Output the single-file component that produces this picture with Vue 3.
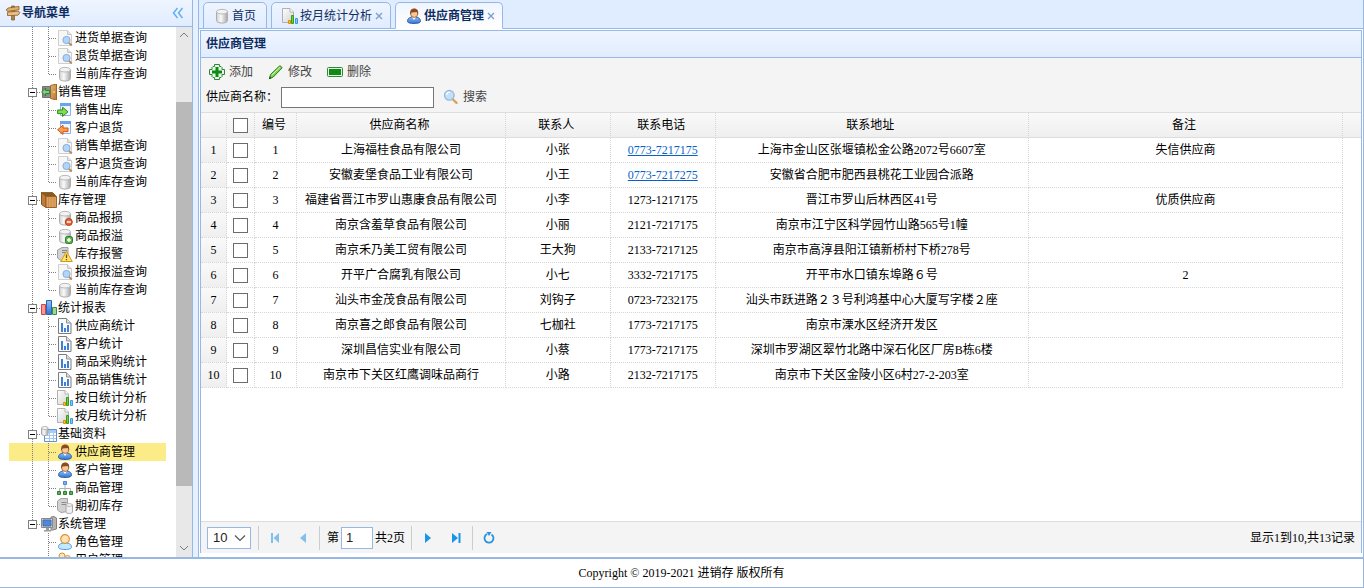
<script setup>
import { ref } from 'vue'

const groups = ref([
  {
    lead: true,
    items: [
      { icon: 'doc-search', text: '进货单据查询' },
      { icon: 'doc-search', text: '退货单据查询' },
      { icon: 'db', text: '当前库存查询' }
    ]
  },
  {
    icon: 'door',
    text: '销售管理',
    items: [
      { icon: 'go-out', text: '销售出库' },
      { icon: 'go-back', text: '客户退货' },
      { icon: 'doc-search', text: '销售单据查询' },
      { icon: 'doc-search', text: '客户退货查询' },
      { icon: 'db', text: '当前库存查询' }
    ]
  },
  {
    icon: 'box',
    text: '库存管理',
    items: [
      { icon: 'db-minus', text: '商品报损' },
      { icon: 'db-plus', text: '商品报溢' },
      { icon: 'server-warn', text: '库存报警' },
      { icon: 'doc-search', text: '报损报溢查询' },
      { icon: 'db', text: '当前库存查询' }
    ]
  },
  {
    icon: 'bars',
    text: '统计报表',
    items: [
      { icon: 'doc-chart', text: '供应商统计' },
      { icon: 'doc-chart', text: '客户统计' },
      { icon: 'doc-chart', text: '商品采购统计' },
      { icon: 'doc-chart', text: '商品销售统计' },
      { icon: 'doc-bars', text: '按日统计分析' },
      { icon: 'doc-bars', text: '按月统计分析' }
    ]
  },
  {
    icon: 'db-table',
    text: '基础资料',
    items: [
      { icon: 'user', text: '供应商管理', selected: true },
      { icon: 'user', text: '客户管理' },
      { icon: 'org', text: '商品管理' },
      { icon: 'server-db', text: '期初库存' }
    ]
  },
  {
    icon: 'computer',
    text: '系统管理',
    last: true,
    items: [
      { icon: 'person', text: '角色管理' },
      { icon: 'people', text: '用户管理' }
    ]
  }
])

const tabs = [
  { icon: 'db', text: '首页' },
  { icon: 'doc-bars', text: '按月统计分析', closable: true },
  { icon: 'user', text: '供应商管理', closable: true, active: true }
]

const tools = [
  { icon: 'add', text: '添加' },
  { icon: 'pencil', text: '修改' },
  { icon: 'remove', text: '删除' }
]

const suppliers = [
  { id: 1, name: '上海福桂食品有限公司', contact: '小张', phone: '0773-7217175', link: true, address: '上海市金山区张堰镇松金公路2072号6607室', remark: '失信供应商' },
  { id: 2, name: '安徽麦堡食品工业有限公司', contact: '小王', phone: '0773-7217275', link: true, address: '安徽省合肥市肥西县桃花工业园合派路', remark: '' },
  { id: 3, name: '福建省晋江市罗山惠康食品有限公司', contact: '小李', phone: '1273-1217175', address: '晋江市罗山后林西区41号', remark: '优质供应商' },
  { id: 4, name: '南京含羞草食品有限公司', contact: '小丽', phone: '2121-7217175', address: '南京市江宁区科学园竹山路565号1幢', remark: '' },
  { id: 5, name: '南京禾乃美工贸有限公司', contact: '王大狗', phone: '2133-7217125', address: '南京市高淳县阳江镇新桥村下桥278号', remark: '' },
  { id: 6, name: '开平广合腐乳有限公司', contact: '小七', phone: '3332-7217175', address: '开平市水口镇东埠路６号', remark: '2' },
  { id: 7, name: '汕头市金茂食品有限公司', contact: '刘钩子', phone: '0723-7232175', address: '汕头市跃进路２３号利鸿基中心大厦写字楼２座', remark: '' },
  { id: 8, name: '南京喜之郎食品有限公司', contact: '七枷社', phone: '1773-7217175', address: '南京市溧水区经济开发区', remark: '' },
  { id: 9, name: '深圳昌信实业有限公司', contact: '小蔡', phone: '1773-7217175', address: '深圳市罗湖区翠竹北路中深石化区厂房B栋6楼', remark: '' },
  { id: 10, name: '南京市下关区红鹰调味品商行', contact: '小路', phone: '2132-7217175', address: '南京市下关区金陵小区6村27-2-203室', remark: '' }
]

const keyword = ref('')
const page = ref('1')
const size = ref('10')
</script>

<template>
  <div class="app">
    <svg class="sprite" aria-hidden="true">
      <defs>
        <linearGradient id="g-metal" x1="0" x2="1" y1="0" y2="0">
          <stop offset="0" stop-color="#cfcfcf" /><stop offset=".4" stop-color="#fafafa" /><stop offset="1" stop-color="#a6a6a6" />
        </linearGradient>
        <linearGradient id="g-blue" x1="0" x2="0" y1="0" y2="1">
          <stop offset="0" stop-color="#8fc0f5" /><stop offset="1" stop-color="#3173cb" />
        </linearGradient>
        <linearGradient id="g-page" x1="0" x2="1" y1="0" y2="1">
          <stop offset="0" stop-color="#ffffff" /><stop offset="1" stop-color="#d2d2d2" />
        </linearGradient>
        <linearGradient id="g-wood" x1="0" x2="1" y1="0" y2="1">
          <stop offset="0" stop-color="#e3b676" /><stop offset="1" stop-color="#b57a38" />
        </linearGradient>
      </defs>

      <symbol id="i-sign" viewBox="0 0 16 16">
        <path d="M7.5 1h2v14h-3V1z" fill="#b58442" stroke="#805225" stroke-width=".7" />
        <path d="M1 5l2-2 11-1.6v3.4L3 6.400z" fill="#dfb068" stroke="#8c5c2c" stroke-width=".8" />
        <path d="M15 7.600l-2-1.400-10.500 1v3.400l10.500-.4z" fill="#e8c080" stroke="#8c5c2c" stroke-width=".8" />
      </symbol>
      <symbol id="i-doc-search" viewBox="0 0 16 16">
        <path d="M1.500.5h9l4 4v11h-13z" fill="#f7f7f7" stroke="#cfcfcf" />
        <path d="M10.500.5v4h4" fill="#e4e4e4" stroke="#c6c6c6" />
        <path d="M11.800 12.800l3 2.700" stroke="#c08a52" stroke-width="2" />
        <circle cx="9.500" cy="10" r="3.600" fill="#b4d4f6" stroke="#84acdf" />
      </symbol>
      <symbol id="i-db" viewBox="0 0 16 16">
        <path d="M2.500 3.500v9c0 3.400 11 3.400 11 0v-9z" fill="url(#g-metal)" stroke="#adadad" />
        <ellipse cx="8" cy="3.700" rx="5.500" ry="2.300" fill="#f3f3f3" stroke="#bababa" />
      </symbol>
      <symbol id="i-door" viewBox="0 0 16 16">
        <path d="M1.500 2.500h10v11h-10z" fill="#8b8b8b" stroke="#6a756b" />
        <path d="M9.500 1.500l6-1.500v16l-6-1.500z" fill="url(#g-wood)" stroke="#9c672b" />
        <circle cx="13" cy="8" r=".9" fill="#ffe15c" />
        <path d="M.6 8l4-4v2.500h4v3h-4V12z" fill="#7fd07a" stroke="#277c2c" stroke-width=".9" />
      </symbol>
      <symbol id="i-go-out" viewBox="0 0 16 16">
        <path d="M3.500 1.500h10v12h-10z" fill="#eef6ff" stroke="#8cb4e5" /><path d="M3 1h11v3H3z" fill="#6aa5ea" />
        <path d="M.6 8h5V5.200L11 9.800l-5.400 4.600v-2.800h-5z" fill="#83dc4f" stroke="#2b8b1c" />
      </symbol>
      <symbol id="i-go-back" viewBox="0 0 16 16">
        <path d="M3.500 1.500h10v12h-10z" fill="#eef6ff" stroke="#8cb4e5" /><path d="M3 1h11v3H3z" fill="#6aa5ea" />
        <path d="M11 8H6V5.200L.6 9.800 6 14.400v-2.800h5z" fill="#ff9c4d" stroke="#cf5713" />
      </symbol>
      <symbol id="i-box" viewBox="0 0 16 16">
        <path d="M.5.5h11l4 4H5z" fill="#8a5823" stroke="#94602a" />
        <path d="M.5.5L5 4.500v11l-4.500-3z" fill="#bd7c39" stroke="#8a5520" />
        <path d="M5 4.500h10.500v11H5z" fill="#dda260" stroke="#9c6128" />
        <path d="M7.500 5v10M10.200 5v10M13 5v10" stroke="#c68a48" stroke-width=".8" />
      </symbol>
      <symbol id="i-db-minus" viewBox="0 0 16 16">
        <use href="#i-db" />
        <circle cx="11.800" cy="12" r="3.500" fill="#ec6535" stroke="#b63c12" /><path d="M9.800 12h4" stroke="#fff" stroke-width="1.500" />
      </symbol>
      <symbol id="i-db-plus" viewBox="0 0 16 16">
        <use href="#i-db" />
        <rect x="8.500" y="8.500" width="7" height="7" rx="2" fill="#58b247" stroke="#28782a" /><path d="M10 12h4M12 10v4" stroke="#fff" stroke-width="1.400" />
      </symbol>
      <symbol id="i-server-warn" viewBox="0 0 16 16">
        <path d="M.5 4L5 1.500h6v13H4L.5 12z" fill="#d2d2d2" stroke="#a0a0a0" /><path d="M5 4.500h5M5 6.500h5" stroke="#858585" />
        <path d="M9.500 5.500l5.800 10H3.700z" fill="#ffe56a" stroke="#d39a19" /><path d="M9.500 8.500v3.500M9.500 13v1.300" stroke="#7a5204" stroke-width="1.300" />
      </symbol>
      <symbol id="i-bars" viewBox="0 0 16 16">
        <path d="M.5 4.500h4v10h-4z" fill="#f4989b" stroke="#d34145" />
        <path d="M5.500.5h5v14h-5z" fill="url(#g-blue)" stroke="#2864b8" />
        <path d="M11.500 7.500h4v7h-4z" fill="#a2d69d" stroke="#3d8d42" />
      </symbol>
      <symbol id="i-doc-chart" viewBox="0 0 16 16">
        <path d="M1.500.5h8l4.500 4.500v10.500H1.500z" fill="#fafafa" stroke="#7c7c7c" /><path d="M9.500.5V5H14" fill="#ddd" stroke="#929292" />
        <path d="M4 5h2v9H4zM7 10h2v4H7zM10 7h2v7h-2z" fill="#3e80d5" />
      </symbol>
      <symbol id="i-doc-bars" viewBox="0 0 16 16">
        <path d="M.5.5h7.500l3.500 3.500v10.500H.5z" fill="url(#g-page)" stroke="#b0b0b0" /><path d="M8 .5V4h3.500" fill="#fff" stroke="#b6b6b6" />
        <path d="M6.500 12.500h2v3h-2z" fill="#ffc21d" stroke="#dd8d0d" />
        <path d="M9.500 7.500h2v8h-2z" fill="#6fd03d" stroke="#369a1b" />
        <path d="M13.500 10.500h2v5h-2z" fill="#7dcdf7" stroke="#4398dc" />
      </symbol>
      <symbol id="i-db-table" viewBox="0 0 16 16">
        <path d="M3.500 3.500h12v12h-12z" fill="#fff" stroke="#5d92d2" /><path d="M4 4h11v3H4z" fill="#a7cef2" />
        <path d="M4 9.500h11M4 12.500h11M8.500 7v8M12.500 7v8" stroke="#a5c8ee" />
        <path d="M.5 2v6c0 2 6.500 2 6.500 0V2z" fill="url(#g-metal)" stroke="#ababab" /><ellipse cx="3.800" cy="2" rx="3.300" ry="1.500" fill="#f6f6f6" stroke="#b5b5b5" />
      </symbol>
      <symbol id="i-user" viewBox="0 0 16 16">
        <path d="M1.500 13.500C1.500 10 4 9 8 9s6.500 1 6.500 4.500c0 1-2.500 2-6.500 2s-6.500-1-6.500-2z" fill="url(#g-blue)" stroke="#2c5da9" />
        <path d="M6 9h4l-2 3z" fill="#fff" />
        <circle cx="8.200" cy="5.800" r="3.600" fill="#f9c894" stroke="#90542a" stroke-width=".8" />
        <path d="M4.300 6.500C3.500 2.500 5.500.5 8 .5s5 1.500 4 6l-1-2.500-5.500.5z" fill="#8b4a22" />
      </symbol>
      <symbol id="i-person" viewBox="0 0 16 16">
        <path d="M1.500 13.500C1.500 10 4 9 8 9s6.500 1 6.500 4.500c0 1-2.500 2-6.500 2s-6.500-1-6.500-2z" fill="#c6e8ff" stroke="#3b9be5" />
        <circle cx="8" cy="5" r="4.300" fill="#ffe3b5" stroke="#dc9231" stroke-width="1.200" />
      </symbol>
      <symbol id="i-people" viewBox="0 0 16 16">
        <circle cx="5" cy="4" r="3" fill="#ffe3b5" stroke="#dc9231" /><circle cx="10.500" cy="6.500" r="3" fill="#ffe3b5" stroke="#dc9231" />
        <path d="M.5 13c0-4 4-5 6-4M5 15.500c0-6 10-6 10.500 0z" fill="#c6e8ff" stroke="#3b9be5" />
      </symbol>
      <symbol id="i-org" viewBox="0 0 16 16">
        <path d="M8 5v3M2.500 11V8.500h11V11M8 8v3" fill="none" stroke="#b0b0b0" />
        <path d="M6.500 1.500h3v3h-3z" fill="#7db3f5" stroke="#4a87d5" />
        <path d="M.5 11.500h3v3h-3zM6.500 11.500h3v3h-3zM12.500 11.500h3v3h-3z" fill="#5eb05e" stroke="#2a802c" />
      </symbol>
      <symbol id="i-server-db" viewBox="0 0 16 16">
        <path d="M.5 3L4 .5h6.500v13L4 14.500.5 12z" fill="#d2d2d2" stroke="#a2a2a2" /><path d="M4.500 4.500h5M4.500 6.500h5" stroke="#8a8a8a" />
        <path d="M9 7v7c0 2 6.500 2 6.500 0V7z" fill="#efefef" stroke="#a8a8a8" /><ellipse cx="12.200" cy="7" rx="3.300" ry="1.300" fill="#fff" stroke="#b0b0b0" />
      </symbol>
      <symbol id="i-computer" viewBox="0 0 16 16">
        <path d="M10 1l3-.5 2.500 1.500v11L12 14h-2z" fill="#b3b3b3" stroke="#828282" />
        <path d="M.5 2.500h11v9H.5z" fill="#d8d8d8" stroke="#888" /><path d="M2 4h8v6H2z" fill="#4f88d6" stroke="#3f6cb0" />
        <path d="M5 12h3v2h2v1.500H3V14h2z" fill="#9a9a9a" />
      </symbol>
      <symbol id="i-add" viewBox="0 0 16 16">
        <path d="M5.500.5h5v2h1.500l1 1v2h2.500v5H13v2l-1 1h-1.500v2h-5v-2H4l-1-1v-2H.5v-5H3v-2l1-1h1.500z" fill="#e5f4e4" stroke="#31863a" />
        <path d="M6.500 3h3v3.500H13v3H9.500V13h-3V9.500H3v-3h3.500z" fill="#0f8a15" />
      </symbol>
      <symbol id="i-pencil" viewBox="0 0 16 16">
        <path d="M1.500 14.500l1-4L11.500 2c.6-.6 3 1.200 2.500 2L5.300 13z" fill="#7fd44e" stroke="#2c7d24" />
        <path d="M3.800 11L12 3.300" stroke="#d4f7b8" /><path d="M.8 15.200l1-2.700 1.700 1.700z" fill="#1b4f16" />
      </symbol>
      <symbol id="i-remove" viewBox="0 0 16 16">
        <rect x=".5" y="3.500" width="15" height="9" rx="1" fill="#e5f4e4" stroke="#31863a" /><path d="M2 5h12v6H2z" fill="#0f8a15" />
      </symbol>
      <symbol id="i-search" viewBox="0 0 16 16">
        <path d="M9.500 10l4 3.800" stroke="#d9a35a" stroke-width="2.400" stroke-linecap="round" />
        <circle cx="6.300" cy="6.300" r="4.800" fill="#c0e0fb" stroke="#9bb8d2" stroke-width="1.300" /><path d="M3.800 6c0-2 1.500-2.800 3-2.800" fill="none" stroke="#fff" stroke-width="1.300" />
      </symbol>
      <symbol id="i-first" viewBox="0 0 16 16"><path d="M4 3h2v10H4zM12 3v10L6.500 8z" fill="#7fc0ef" /></symbol>
      <symbol id="i-prev" viewBox="0 0 16 16"><path d="M11 3v10L5 8z" fill="#7fc0ef" /></symbol>
      <symbol id="i-next" viewBox="0 0 16 16"><path d="M5 3v10l6-5z" fill="#1b95ea" /></symbol>
      <symbol id="i-last" viewBox="0 0 16 16"><path d="M10.500 3h2v10h-2zM4 3v10l6-5z" fill="#1b95ea" /></symbol>
      <symbol id="i-refresh" viewBox="0 0 16 16">
        <path d="M6.200 4A4.500 4.500 0 1 0 10.500 4.400" fill="none" stroke="#2b93dd" stroke-width="1.800" /><path d="M5.500 2h5L8 6z" fill="#2b93dd" />
      </symbol>
      <symbol id="i-close" viewBox="0 0 8 8"><path d="M1 1l6 6M7 1L1 7" stroke="#7e9cce" stroke-width="1.400" /></symbol>
      <symbol id="i-collapse" viewBox="0 0 12 12"><path d="M5.500 1L1.500 6l4 5M10.500 1l-4 5 4 5" fill="none" stroke="#62aeee" stroke-width="1.500" /></symbol>
      <symbol id="i-up" viewBox="0 0 10 6"><path d="M1 5l4-4 4 4" fill="none" stroke="#7b7b7b" /></symbol>
      <symbol id="i-down" viewBox="0 0 10 6"><path d="M1 1l4 4 4-4" fill="none" stroke="#7b7b7b" /></symbol>
    </svg>

    <div class="main">
      <aside class="nav">
        <header class="nav-head">
          <svg class="icon"><use href="#i-sign" /></svg>
          <h2>导航菜单</h2>
          <button class="bare" aria-label="收起"><svg class="collapse"><use href="#i-collapse" /></svg></button>
        </header>
        <div class="nav-body">
          <ul class="tree">
            <template v-for="(g, gi) in groups" :key="gi">
              <li v-if="g.lead" class="lead"><i class="cell" /><i class="cell line" /><i class="cell line" /></li>
              <li v-else class="node group">
                <i class="cell" />
                <i class="cell stem" :class="{ end: g.last }"><button class="toggle" :aria-label="'折叠' + g.text" /></i>
                <svg class="icon"><use :href="'#i-' + g.icon" /></svg>
                <span>{{ g.text }}</span>
              </li>
              <li v-for="(n, i) in g.items" :key="n.text" class="node" :class="{ selected: n.selected }">
                <i class="cell" />
                <i class="cell" :class="{ line: !g.last }" />
                <i class="cell join" :class="{ end: i === g.items.length - 1 }" />
                <svg class="icon"><use :href="'#i-' + n.icon" /></svg>
                <span>{{ n.text }}</span>
              </li>
            </template>
          </ul>
          <div class="scroll" aria-hidden="true">
            <svg class="arrow"><use href="#i-up" /></svg>
            <div class="track"><div class="thumb" /></div>
            <svg class="arrow"><use href="#i-down" /></svg>
          </div>
        </div>
      </aside>

      <section class="center">
        <nav class="tabs">
          <div v-for="t in tabs" :key="t.text" class="tab" :class="{ active: t.active }">
            <a href="#"><svg class="icon"><use :href="'#i-' + t.icon" /></svg>{{ t.text }}</a>
            <button v-if="t.closable" class="bare" :aria-label="'关闭' + t.text"><svg class="close"><use href="#i-close" /></svg></button>
          </div>
        </nav>
        <div class="content">
          <div class="panel">
            <h1>供应商管理</h1>
            <div class="toolbar">
              <div class="tools">
                <button v-for="t in tools" :key="t.text" class="bare tool"><svg class="icon"><use :href="'#i-' + t.icon" /></svg>{{ t.text }}</button>
              </div>
              <div class="query">
                <label for="keyword">供应商名称：</label>
                <input id="keyword" v-model="keyword" type="text">
                <button class="bare tool"><svg class="icon"><use href="#i-search" /></svg>搜索</button>
              </div>
            </div>
            <div class="grid">
              <table>
                <colgroup>
                  <col class="c-row"><col class="c-check"><col class="c-id"><col class="c-name"><col class="c-contact"><col class="c-contact"><col class="c-address"><col><col class="c-gutter">
                </colgroup>
                <thead>
                  <tr>
                    <th /><th class="check"><input type="checkbox" aria-label="全选"></th>
                    <th>编号</th><th>供应商名称</th><th>联系人</th><th>联系电话</th><th>联系地址</th><th>备注</th><th />
                  </tr>
                </thead>
                <tbody>
                  <tr v-for="(s, i) in suppliers" :key="s.id">
                    <td class="num">{{ i + 1 }}</td>
                    <td class="check"><input type="checkbox" :aria-label="'选择' + s.name"></td>
                    <td>{{ s.id }}</td>
                    <td>{{ s.name }}</td>
                    <td>{{ s.contact }}</td>
                    <td><a v-if="s.link" :href="'tel:' + s.phone">{{ s.phone }}</a><template v-else>{{ s.phone }}</template></td>
                    <td>{{ s.address }}</td>
                    <td>{{ s.remark }}</td>
                    <td class="gutter" />
                  </tr>
                </tbody>
              </table>
            </div>
            <div class="pager">
              <div class="select">
                <select v-model="size" aria-label="每页条数"><option>10</option><option>20</option><option>50</option></select>
                <svg class="chevron" viewBox="0 0 12 8"><path d="M1 1.500l5 5 5-5" fill="none" stroke="#555" stroke-width="1.200" /></svg>
              </div>
              <i class="sep" />
              <button class="bare page-btn" aria-label="首页" disabled><svg class="icon"><use href="#i-first" /></svg></button>
              <button class="bare page-btn" aria-label="上一页" disabled><svg class="icon"><use href="#i-prev" /></svg></button>
              <i class="sep" />
              <label class="page-label" for="page">第</label>
              <input id="page" v-model="page" type="text">
              <span class="total">共2页</span>
              <i class="sep" />
              <button class="bare page-btn" aria-label="下一页"><svg class="icon"><use href="#i-next" /></svg></button>
              <button class="bare page-btn" aria-label="末页"><svg class="icon"><use href="#i-last" /></svg></button>
              <i class="sep" />
              <button class="bare page-btn" aria-label="刷新"><svg class="icon"><use href="#i-refresh" /></svg></button>
              <span class="info">显示1到10,共13记录</span>
            </div>
          </div>
        </div>
      </section>
    </div>
    <footer class="footer">Copyright © 2019-2021 进销存 版权所有</footer>
  </div>
</template>

<style scoped>
.app {
  display: flex;
  flex-direction: column;
  height: 100vh;
  box-sizing: border-box;
  border-right: 1px solid #95b8e7;
  border-bottom: 1px solid #95b8e7;
  background: #fff;
  color: #000;
  font: 12px/18px "Liberation Serif", "Noto Sans CJK SC", serif;
}
.app * { box-sizing: border-box; }
.sprite { position: absolute; width: 0; height: 0; }
.icon { flex: none; display: block; width: 16px; height: 16px; }
.bare { padding: 0; border: 0; background: none; font: inherit; color: inherit; cursor: pointer; }
.main { flex: 1; min-height: 0; display: flex; gap: 5px; background: #e6f0ff; border-bottom: 2px solid #95b8e7; }

.nav { flex: none; width: 193px; display: flex; flex-direction: column; border-right: 1px solid #95b8e7; background: #fff; }
.nav-head {
  flex: none;
  display: flex;
  align-items: center;
  height: 27px;
  padding: 0 8px 0 5px;
  border-bottom: 1px solid #95b8e7;
  background: linear-gradient(#eff5ff, #e0ecff);
}
.nav-head h2 { flex: 1; margin: 0 0 0 1px; font-size: 12px; color: #0e2d5f; }
.collapse { display: block; width: 12px; height: 12px; }
.nav-body { flex: 1; min-height: 0; display: flex; }
.tree { flex: 1; margin: 0; padding: 0 10px 0 9px; overflow: hidden; list-style: none; }
.lead { display: flex; height: 2px; }
.node { display: flex; align-items: center; height: 18px; white-space: nowrap; }
.node span { padding-left: 2px; }
.group span { padding-left: 1px; }
.selected { background: #fbec88; }
.cell {
  --v: repeating-linear-gradient(to bottom, #808080 0 1px, transparent 1px 2px);
  --h: repeating-linear-gradient(to right, #808080 0 1px, transparent 1px 2px);
  flex: none;
  display: flex;
  align-items: center;
  justify-content: center;
  width: 16px;
  height: 100%;
}
.line { background: var(--v) 7px 0 / 1px 100% no-repeat; }
.join, .stem { background: var(--v) 7px 0 / 1px 100% no-repeat, var(--h) 8px 9px / 8px 1px no-repeat; }
.join.end, .stem.end { background: var(--v) 7px 0 / 1px 9px no-repeat, var(--h) 8px 9px / 8px 1px no-repeat; }
.toggle {
  width: 9px;
  height: 9px;
  margin-right: 1px;
  padding: 0;
  border: 1px solid #808080;
  background: linear-gradient(#000, #000) center / 5px 1px no-repeat #fff;
}
.scroll { flex: none; width: 16px; display: flex; flex-direction: column; align-items: center; background: #e8e8e8; }
.arrow { flex: none; width: 10px; height: 6px; margin: 5px 0 6px; }
.track { flex: 1; width: 100%; display: flex; flex-direction: column; justify-content: flex-end; }
.thumb { height: 77.5%; margin-bottom: 54px; background: #b9b9b9; }

.center { flex: 1; min-width: 0; display: flex; flex-direction: column; border-left: 1px solid #95b8e7; background: #fff; }
.tabs {
  flex: none;
  display: flex;
  gap: 4px;
  height: 29px;
  padding: 2px 4px 0;
  border-bottom: 1px solid #95b8e7;
  background: #e0ecff;
}
.tab {
  display: flex;
  align-items: center;
  height: 27px;
  padding: 0 10px;
  border: 1px solid #95b8e7;
  border-radius: 5px 5px 0 0;
  background: linear-gradient(#eff5ff, #e0ecff);
  color: #0e2d5f;
}
.tab a { display: flex; align-items: center; gap: 2px; color: inherit; text-decoration: none; }
.tab:has(.close) { padding-right: 7px; }
.tab.active { border-bottom-color: #fff; background: linear-gradient(#eff5ff, #fff); font-weight: bold; }
.close { display: block; width: 8px; height: 8px; margin-left: 3px; }
.content { flex: 1; min-height: 0; display: flex; padding: 1px 1px 4px; }
.panel { flex: 1; min-width: 0; display: flex; flex-direction: column; border: 1px solid #95b8e7; border-bottom: 0; }
.panel h1 {
  flex: none;
  height: 27px;
  margin: 0;
  padding: 4px 5px;
  border-bottom: 1px solid #95b8e7;
  background: linear-gradient(#eff5ff, #e0ecff);
  color: #0e2d5f;
  font-size: 12px;
  line-height: 18px;
}
.toolbar { flex: none; height: 55px; padding: 2px 5px; border-bottom: 1px solid #ddd; background: #f4f4f4; }
.tools { display: flex; gap: 15px; height: 24px; padding: 0 3px; }
.tool { display: flex; align-items: center; gap: 4px; color: #444; }
.query { display: flex; align-items: center; gap: 3px; height: 26px; }
.query .tool { margin-left: 6px; }
#keyword { width: 153px; height: 21px; padding: 1px 3px; border: 1px solid #767676; background: #fff; font: inherit; }

.grid { flex: 1; min-height: 0; overflow: hidden; }
table { width: 100%; table-layout: fixed; border-spacing: 0; }
.c-row { width: 26px; }
.c-check { width: 28px; }
.c-id { width: 42px; }
.c-name { width: 18%; }
.c-contact { width: 9.05%; }
.c-address { width: 27%; }
.c-gutter { width: 18px; }
th, td { height: 25px; padding: 0; border-right: 1px dotted #d6d6d6; border-bottom: 1px dotted #d6d6d6; font-weight: normal; text-align: center; white-space: nowrap; overflow: hidden; }
th { padding-right: 3px; border-bottom: 1px solid #ddd; background: linear-gradient(#f9f9f9, #efefef); }
th:last-child, td.gutter { border-right: 0; }
td.gutter { border-bottom: 0; }
.check { padding: 0; }
.num { background: linear-gradient(#f9f9f9, #efefef); }
td a { color: #0b5fc9; }
input[type="checkbox"] {
  display: block;
  appearance: none;
  width: 15px;
  height: 15px;
  margin: 0 auto;
  border: 1px solid #6c6c6c;
  background: #fff;
}

.pager { flex: none; display: flex; align-items: center; height: 32px; padding: 0 6px; border-top: 1px solid #ddd; background: #f4f4f4; }
.select { position: relative; width: 44px; height: 22px; }
.select select { display: block; appearance: none; width: 100%; height: 100%; padding: 0 0 0 5px; border: 1px solid #95b8e7; border-radius: 0; background: #fff; color: #222; font: 13px "Liberation Sans", sans-serif; }
.chevron { position: absolute; right: 5px; top: 7px; width: 12px; height: 8px; pointer-events: none; }
.sep { width: 1px; height: 24px; margin: 0 2px; background: #ccc; }
.select + .sep { margin-left: 7px; }
.page-btn { display: flex; align-items: center; justify-content: center; width: 28px; height: 24px; }
.page-label { padding: 0 2px 0 5px; }
#page { width: 32px; height: 22px; padding: 0 4px; border: 1px solid #95b8e7; background: #fff; color: #222; font: 13px "Liberation Sans", sans-serif; }
.total { padding: 0 4px 0 2px; }
.info { margin-left: auto; }
.footer { flex: none; height: 28px; line-height: 28px; text-align: center; }
</style>

<style>
body { margin: 0; }
</style>
